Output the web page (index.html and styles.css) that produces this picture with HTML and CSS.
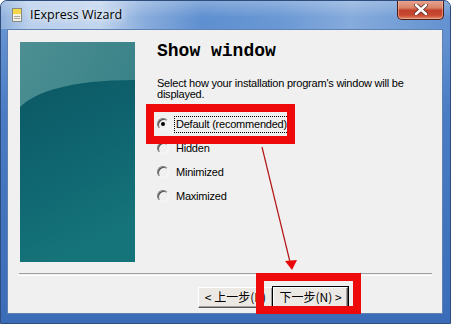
FILE: index.html
```html
<!DOCTYPE html>
<html>
<head>
<meta charset="utf-8">
<link rel="stylesheet" href="styles.css">
</head>
<body>
<div class="window">
  <div class="titlebar">
    <svg class="app-icon" width="10" height="14" viewBox="0 0 10 14">
      <rect x="0.5" y="0.5" width="9" height="13" fill="#f4f1e4" stroke="#8b8a80"/>
      <rect x="1" y="1" width="8" height="5" fill="#f2d84a"/>
      <rect x="2" y="8" width="6" height="1" fill="#a9a9a0"/>
      <rect x="2" y="10" width="6" height="1" fill="#a9a9a0"/>
    </svg>
    <span class="title">IExpress Wizard</span>
    <div class="close">
      <svg width="14" height="11" viewBox="0 0 14 11">
        <path d="M2 1 L12 10 M12 1 L2 10" stroke="#5a2a22" stroke-width="4.2" stroke-linecap="round"/>
        <path d="M2 1 L12 10 M12 1 L2 10" stroke="#ffffff" stroke-width="2.6" stroke-linecap="round"/>
      </svg>
    </div>
  </div>
  <div class="client">
    <div class="main">
      <svg class="banner" width="115" height="220" viewBox="0 0 115 220">
        <defs>
          <linearGradient id="lite" x1="0" y1="0" x2="1" y2="1">
            <stop offset="0" stop-color="#4d8f93"/>
            <stop offset="1" stop-color="#2b7a80"/>
          </linearGradient>
          <linearGradient id="dark" x1="0" y1="0" x2="0.3" y2="1">
            <stop offset="0" stop-color="#0b5863"/>
            <stop offset="0.5" stop-color="#0f6570"/>
            <stop offset="1" stop-color="#157479"/>
          </linearGradient>
        </defs>
        <rect width="115" height="220" fill="url(#lite)"/>
        <path d="M0 65 C15 50 50 38 115 38 L115 220 L0 220 Z" fill="url(#dark)"/>
      </svg>
      <div class="content">
        <h1 class="heading">Show window</h1>
        <p class="desc">Select how your installation program's window will be displayed.</p>
        <div class="options">
          <div class="option"><span class="radio checked"></span><span class="label focus">Default (recommended)</span></div>
          <div class="option"><span class="radio"></span><span class="label">Hidden</span></div>
          <div class="option"><span class="radio"></span><span class="label">Minimized</span></div>
          <div class="option"><span class="radio"></span><span class="label">Maximized</span></div>
        </div>
      </div>
    </div>
    <div class="separator"></div>
    <div class="buttons">
      <div class="btn">&lt; 上一步(B)</div>
      <div class="btn btn-default">下一步(N) &gt;</div>
    </div>
  </div>
  <div class="highlight hl-option"></div>
  <div class="highlight hl-next"></div>
  <svg class="arrow" width="451" height="324" viewBox="0 0 451 324">
    <line x1="262" y1="147" x2="290" y2="262" stroke="#b41414" stroke-width="1.2"/>
    <polygon points="285,261 297,260 292,270" fill="#e80808"/>
  </svg>
</div>
</body>
</html>
```
FILE: styles.css
```css
html, body {
  margin: 0;
  padding: 0;
  width: 451px;
  height: 324px;
  overflow: hidden;
  background: #ffffff;
}

.window {
  position: relative;
  width: 451px;
  height: 324px;
  box-sizing: border-box;
  border: 1px solid #2e4d7c;
  border-radius: 7px 7px 0 0;
  background: linear-gradient(180deg, #6f9ad6 0%, #4a7cc4 35%, #3a6cb8 100%);
  display: flex;
  flex-direction: column;
  overflow: hidden;
}

.titlebar {
  height: 28px;
  flex: none;
  display: flex;
  align-items: flex-start;
  background:
    linear-gradient(180deg, rgba(255,255,255,0.25) 0%, rgba(255,255,255,0) 60%),
    linear-gradient(90deg, #8fb0dc 0%, #b9cfec 6%, #c2d5ee 22%, #88acdc 32%, #5e8fd0 45%, #6a98d4 62%, #86abdc 78%, #6f9bd4 92%, #6491d0 100%);
}

.app-icon {
  margin: 7px 0 0 11px;
  flex: none;
}

.title {
  margin: 5px 0 0 8px;
  font-family: "Open Sans", "Noto Sans", sans-serif;
  font-size: 12.5px;
  line-height: 18px;
  color: #000;
  text-shadow: 0 0 6px rgba(255,255,255,0.9), 0 0 10px rgba(255,255,255,0.7);
}

.close {
  margin-left: auto;
  margin-right: 6px;
  margin-top: -1px;
  width: 47px;
  height: 20px;
  box-sizing: border-box;
  border: 1px solid #4a1e18;
  border-top: none;
  border-radius: 0 0 5px 5px;
  background: linear-gradient(180deg, #e9a793 0%, #d98469 40%, #c2412a 55%, #c84a32 80%, #e08a68 100%);
  box-shadow: inset 0 0 0 1px rgba(255,200,180,0.5);
  display: flex;
  align-items: center;
  justify-content: center;
}

.client {
  flex: 1;
  margin: 0 7px 9px 6px;
  background: #f0f0f0;
  border: 1px solid #5f82b4;
  display: flex;
  flex-direction: column;
}

.main {
  display: flex;
  padding: 12px 0 0 12px;
}

.banner {
  flex: none;
  display: block;
}

.content {
  margin-left: 22px;
  width: 275px;
  font-family: "Liberation Sans", Arial, sans-serif;
  font-size: 11px;
  letter-spacing: -0.22px;
  color: #000;
}

.heading {
  margin: 0;
  font-family: "Liberation Mono", "Courier New", monospace;
  font-size: 18px;
  font-weight: bold;
  line-height: 18px;
  letter-spacing: 0;
}

.desc {
  margin: 18px 0 0 0;
  line-height: 11px;
}

.options {
  margin-top: 12px;
  display: flex;
  flex-direction: column;
}

.option {
  height: 24px;
  display: flex;
  align-items: center;
}

.radio {
  position: relative;
  width: 12px;
  height: 12px;
  box-sizing: border-box;
  border-radius: 50%;
  border: 1px solid;
  border-color: #7a7a7a #f8f8f8 #f8f8f8 #7a7a7a;
  box-shadow: inset 1px 1px 0 #505050;
  background: #f0f0f0;
  flex: none;
}

.radio.checked::after {
  content: "";
  position: absolute;
  left: 3px;
  top: 3px;
  width: 4px;
  height: 4px;
  border-radius: 50%;
  background: #000;
}

.label {
  margin-left: 6px;
  padding: 1px 1px;
  line-height: 13px;
}

.focus {
  outline: 1px dotted #000;
  outline-offset: 0;
}

.separator {
  margin: 11px 10px 0 11px;
  height: 1px;
  border-top: 1px solid #a0a0a0;
  border-bottom: 1px solid #ffffff;
}

.buttons {
  margin-top: 11px;
  display: flex;
  justify-content: flex-end;
  padding-right: 94px;
}

.btn {
  width: 75px;
  height: 21px;
  box-sizing: border-box;
  border: 1px solid;
  border-color: #ffffff #555555 #555555 #ffffff;
  box-shadow: inset -1px -1px 0 #a0a0a0;
  background: #ece9e4;
  font-family: "Noto Sans CJK SC", sans-serif;
  font-size: 12px;
  line-height: 18px;
  text-align: center;
  color: #000;
  white-space: nowrap;
}

.btn-default {
  outline: 1px solid #000;
}

.highlight {
  position: absolute;
  box-sizing: border-box;
  border: 8px solid #ee0a0a;
}

.hl-option {
  left: 145px;
  top: 103px;
  width: 149px;
  height: 40px;
}

.hl-next {
  left: 255px;
  top: 272px;
  width: 105px;
  height: 41px;
}

.arrow {
  position: absolute;
  left: -1px;
  top: -1px;
}
```
